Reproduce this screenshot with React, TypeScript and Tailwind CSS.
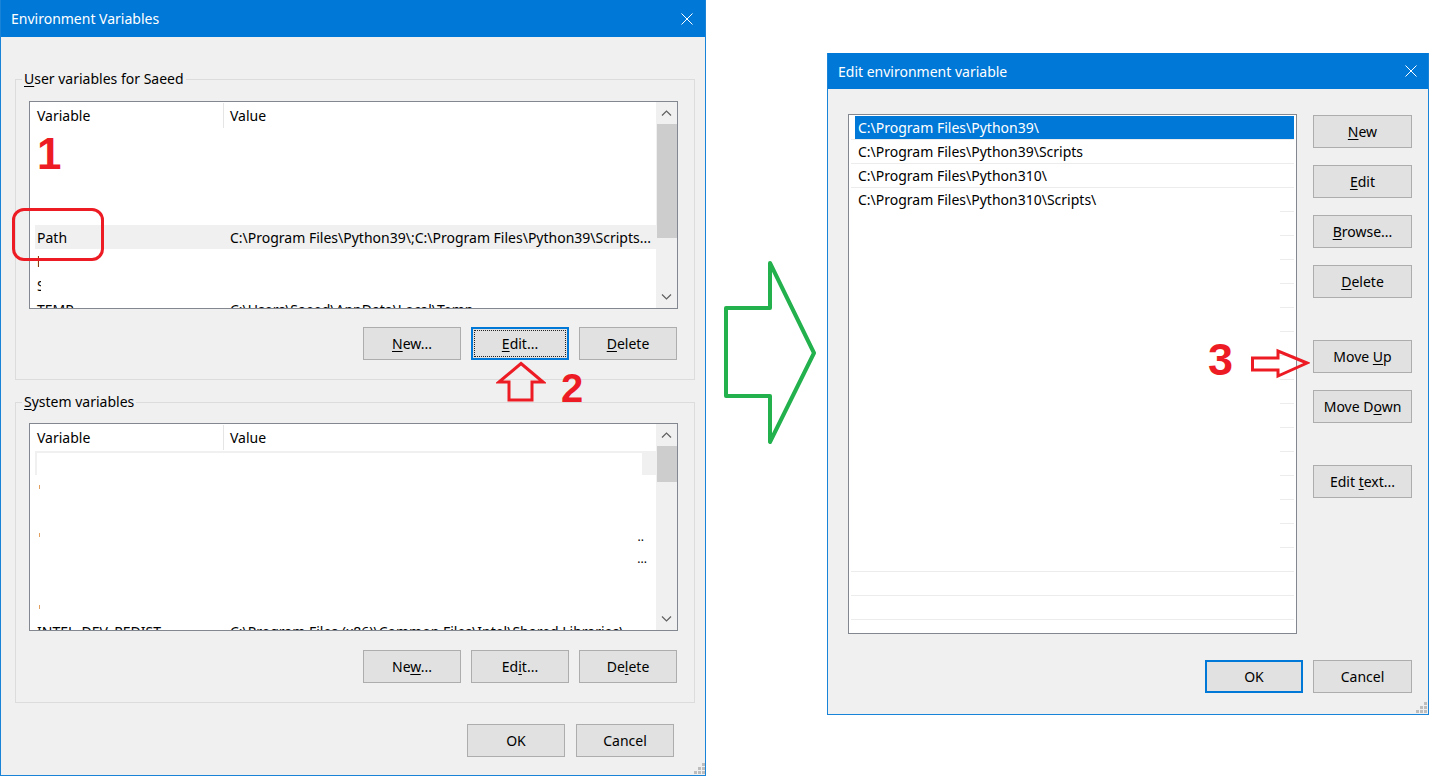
import type { ReactNode } from 'react';

function U({ children }: { children: ReactNode }) {
  return <span className="underline decoration-1 underline-offset-[2px]">{children}</span>;
}

function CloseX() {
  return (
    <svg width="12" height="12" viewBox="0 0 12 12" fill="none" stroke="white" strokeWidth="1">
      <line x1="0.5" y1="0.5" x2="11.5" y2="11.5" />
      <line x1="11.5" y1="0.5" x2="0.5" y2="11.5" />
    </svg>
  );
}

function Grip() {
  return (
    <svg width="11" height="11" viewBox="0 0 11 11" fill="#bdbdbd">
      <rect x="8" y="0" width="3" height="3" />
      <rect x="4" y="4" width="3" height="3" />
      <rect x="8" y="4" width="3" height="3" />
      <rect x="0" y="8" width="3" height="3" />
      <rect x="4" y="8" width="3" height="3" />
      <rect x="8" y="8" width="3" height="3" />
    </svg>
  );
}

function Chevron({ down }: { down?: boolean }) {
  return (
    <svg width="11" height="6" viewBox="0 0 11 6" fill="none" stroke="#606060" strokeWidth="1.2">
      <polyline points={down ? '1,0.5 5.5,5 10,0.5' : '1,5.5 5.5,1 10,5.5'} />
    </svg>
  );
}

function Button({
  children,
  className = '',
  variant = 'normal',
}: {
  children: ReactNode;
  className?: string;
  variant?: 'normal' | 'default' | 'focus';
}) {
  if (variant === 'focus') {
    return (
      <div className={`h-[33px] bg-[#e1e1e1] border-2 border-[#0078d7] p-px ${className}`}>
        <div className="h-full border border-dotted border-[#222] flex items-center justify-center">{children}</div>
      </div>
    );
  }
  const border = variant === 'default' ? 'border-2 border-[#0078d7]' : 'border border-[#adadad]';
  return (
    <div className={`h-[33px] bg-[#e1e1e1] ${border} flex items-center justify-center ${className}`}>{children}</div>
  );
}

function Scrollbar({ thumb }: { thumb: string }) {
  return (
    <div className="w-[21px] shrink-0 bg-[#f0f0f0] flex flex-col">
      <div className="h-[22px] flex items-center justify-center">
        <Chevron />
      </div>
      <div className="flex-1 pl-px">
        <div className={`bg-[#cdcdcd] ${thumb}`} />
      </div>
      <div className="h-[22px] flex items-center justify-center">
        <Chevron down />
      </div>
    </div>
  );
}

function ListFrame({ children, thumb, className = '' }: { children: ReactNode; thumb: string; className?: string }) {
  return (
    <div className={`w-[649px] h-[208px] shrink-0 border border-[#828790] bg-white flex ${className}`}>
      <div className="flex-1 min-w-0 flex flex-col overflow-hidden">
        <div className="h-[27px] shrink-0 flex items-stretch">
          <div className="w-[193px] pl-[7px] flex items-center">Variable</div>
          <div className="w-px my-px bg-[#e5e5e5]" />
          <div className="pl-[6px] flex items-center">Value</div>
        </div>
        {children}
      </div>
      <Scrollbar thumb={thumb} />
    </div>
  );
}

function VarRow({ name, value, selected }: { name?: ReactNode; value?: string; selected?: boolean }) {
  return (
    <div className={`h-[24px] shrink-0 ml-[5px] flex items-center whitespace-nowrap ${selected ? 'bg-[#f0f0f0]' : ''}`}>
      <div className="w-[195px] shrink-0 pl-[2px] overflow-hidden">{name}</div>
      <div className="flex-1 min-w-0 overflow-hidden">{value}</div>
    </div>
  );
}

function Tick({ className = '' }: { className?: string }) {
  return <span className={`block w-px h-[4px] bg-[#e0a060] ml-[2px] ${className}`} />;
}

function GroupBox({ label, children, className = '' }: { label: ReactNode; children: ReactNode; className?: string }) {
  return (
    <div className={`w-[680px] border border-[#dcdcdc] flex flex-col ${className}`}>
      <div className="-mt-[11px] ml-[6px] px-[2px] h-[20px] leading-[20px] bg-[#f0f0f0] self-start">{label}</div>
      {children}
    </div>
  );
}

function EnvVarsDialog() {
  return (
    <div className="w-[706px] h-[776px] shrink-0 bg-[#f0f0f0] border-x border-b border-[#1883d7] flex flex-col">
      <div className="h-[37px] shrink-0 bg-[#0078d7] text-white flex items-center justify-between pl-[10px] pr-[12px]">
        <span>Environment Variables</span>
        <CloseX />
      </div>

      <div className="pl-[14px] flex flex-col">
        <GroupBox className="mt-[42px]" label={<><U>U</U>ser variables for Saeed</>}>
          <ListFrame className="mt-[12px] ml-[13px]" thumb="h-[114px]">
            <VarRow />
            <VarRow />
            <VarRow />
            <VarRow />
            <VarRow selected name="Path" value="C:\Program Files\Python39\;C:\Program Files\Python39\Scripts..." />
            <VarRow name={<span className="block w-[2px] overflow-hidden">l</span>} />
            <VarRow name={<span className="block w-[4px] overflow-hidden">S</span>} />
            <VarRow name="TEMP" value="C:\Users\Saeed\AppData\Local\Temp" />
          </ListFrame>
          <div className="mt-[18px] mb-[19px] pr-[17px] flex justify-end gap-[10px]">
            <Button className="w-[98px]"><span><U>N</U>ew...</span></Button>
            <Button className="w-[98px]" variant="focus"><span><U>E</U>dit...</span></Button>
            <Button className="w-[98px]"><span><U>D</U>elete</span></Button>
          </div>
        </GroupBox>

        <GroupBox className="mt-[22px]" label={<><U>S</U>ystem variables</>}>
          <ListFrame className="mt-[11px] ml-[13px]" thumb="h-[36px]">
            <div className="h-[24px] shrink-0 ml-[5px] bg-[#f0f0f0] pt-[2px] pl-[2px] pr-[14px]">
              <div className="h-full bg-white" />
            </div>
            <div className="h-[24px] shrink-0 ml-[5px] pl-[2px] flex items-center"><Tick /></div>
            <div className="h-[24px] shrink-0" />
            <div className="h-[24px] shrink-0 ml-[5px] pl-[2px] flex items-center justify-between pr-[12px]">
              <Tick />
              <span className="text-[12px] leading-none pt-[4px]">..</span>
            </div>
            <div className="h-[24px] shrink-0 ml-[5px] pl-[2px] flex items-center justify-end pr-[9px]">
              <span className="text-[12px] leading-none">...</span>
            </div>
            <div className="h-[24px] shrink-0" />
            <div className="h-[24px] shrink-0 ml-[5px] pl-[2px] flex items-center"><Tick /></div>
            <VarRow name="INTEL_DEV_REDIST" value="C:\Program Files (x86)\Common Files\Intel\Shared Libraries\" />
          </ListFrame>
          <div className="mt-[19px] mb-[19px] pr-[17px] flex justify-end gap-[10px]">
            <Button className="w-[98px]"><span>Ne<U>w</U>...</span></Button>
            <Button className="w-[98px]"><span>Ed<U>i</U>t...</span></Button>
            <Button className="w-[98px]"><span>De<U>l</U>ete</span></Button>
          </div>
        </GroupBox>
      </div>

      <div className="mt-[21px] pr-[31px] flex justify-end gap-[11px]">
        <Button className="w-[98px]">OK</Button>
        <Button className="w-[98px]">Cancel</Button>
      </div>

      <div className="mt-auto pb-px flex justify-end">
        <Grip />
      </div>
    </div>
  );
}

type PathRow = { text?: string; sep: 'full' | 'short' };

const pathRows: PathRow[] = [
  { text: 'C:\\Program Files\\Python39\\', sep: 'full' },
  { text: 'C:\\Program Files\\Python39\\Scripts', sep: 'full' },
  { text: 'C:\\Program Files\\Python310\\', sep: 'full' },
  { text: 'C:\\Program Files\\Python310\\Scripts\\', sep: 'short' },
  ...Array.from({ length: 14 }, () => ({ sep: 'short' as const })),
  { sep: 'full' },
  { sep: 'full' },
  { sep: 'full' },
  { sep: 'full' },
];

function EditEnvDialog() {
  return (
    <div className="mt-[53px] w-[602px] h-[662px] shrink-0 bg-[#f0f0f0] border-x border-b border-[#1883d7] flex flex-col">
      <div className="h-[36px] shrink-0 bg-[#0078d7] text-white flex items-center justify-between pl-[10px] pr-[11px]">
        <span>Edit environment variable</span>
        <CloseX />
      </div>

      <div className="flex pl-[20px] pr-[16px] gap-[16px]">
        <div className="mt-[25px] w-[449px] h-[520px] border border-[#828790] bg-white pt-px overflow-hidden flex flex-col">
          {pathRows.map((row, i) => (
            <div key={i} className="h-[24px] shrink-0 mx-[2px] flex flex-col">
              {i === 0 ? (
                <div className="flex-1 ml-[4px] bg-[#0078d7] text-white pl-[3px] flex items-center whitespace-nowrap">
                  {row.text}
                </div>
              ) : (
                <div className="flex-1 pl-[7px] flex items-center whitespace-nowrap">{row.text}</div>
              )}
              {row.sep === 'full' ? (
                <div className="h-px w-full bg-[#ececec]" />
              ) : (
                <div className="h-px w-[14px] self-end bg-[#ececec]" />
              )}
            </div>
          ))}
        </div>

        <div className="mt-[26px] w-[99px] flex flex-col">
          <Button><span><U>N</U>ew</span></Button>
          <Button className="mt-[17px]"><span><U>E</U>dit</span></Button>
          <Button className="mt-[17px]"><span><U>B</U>rowse...</span></Button>
          <Button className="mt-[17px]"><span><U>D</U>elete</span></Button>
          <Button className="mt-[42px]"><span>Move <U>U</U>p</span></Button>
          <Button className="mt-[17px]"><span>Move D<U>o</U>wn</span></Button>
          <Button className="mt-[42px]"><span>Edit <U>t</U>ext...</span></Button>
        </div>
      </div>

      <div className="mt-[26px] pr-[16px] flex justify-end gap-[10px]">
        <Button className="w-[98px]" variant="default">OK</Button>
        <Button className="w-[99px]">Cancel</Button>
      </div>

      <div className="mt-auto pb-px pr-px flex justify-end">
        <Grip />
      </div>
    </div>
  );
}

export default function App() {
  return (
    <div className="relative w-[1440px] h-[777px] bg-white overflow-hidden flex items-start text-[14px] text-black font-['Noto_Sans','DejaVu_Sans',sans-serif]">
      <EnvVarsDialog />

      {/* green arrow between the dialogs */}
      <div className="w-[121px] shrink-0 pt-[260px] pl-[18px]">
        <svg width="94" height="186" viewBox="0 0 94 186" fill="none" stroke="#22b14c" strokeWidth="4" strokeLinejoin="round">
          <polygon points="2,48 46,48 46,3 90,93 46,182 46,136 2,136" />
        </svg>
      </div>

      <EditEnvDialog />

      {/* red annotations */}
      <div className="absolute left-[12px] top-[208px] w-[92px] h-[53px] border-[3px] border-[#ed1c24] rounded-[12px]" />
      <span className="absolute left-[37px] top-[132px] text-[44px] leading-none font-bold text-[#ed1c24] font-['Liberation_Sans',Arial,sans-serif]">
        1
      </span>

      <svg className="absolute left-[496px] top-[360px]" width="50" height="43" viewBox="0 0 50 43" fill="none" stroke="#ed1c24" strokeWidth="3">
        <polygon points="25,3.5 47,22 36,22 36,40 13,40 13,22 3,22" />
      </svg>
      <span className="absolute left-[561px] top-[368px] text-[40px] leading-none font-bold text-[#ed1c24] font-['Liberation_Sans',Arial,sans-serif]">
        2
      </span>

      <span className="absolute left-[1208px] top-[337px] text-[45px] leading-none font-bold text-[#ed1c24] font-['Liberation_Sans',Arial,sans-serif]">
        3
      </span>
      <svg className="absolute left-[1250px] top-[348px]" width="60" height="31" viewBox="0 0 60 31" fill="none" stroke="#ed1c24" strokeWidth="3">
        <polygon points="2.5,10 28,10 28,3 57,15 28,28 28,22 2.5,22" />
      </svg>
    </div>
  );
}
